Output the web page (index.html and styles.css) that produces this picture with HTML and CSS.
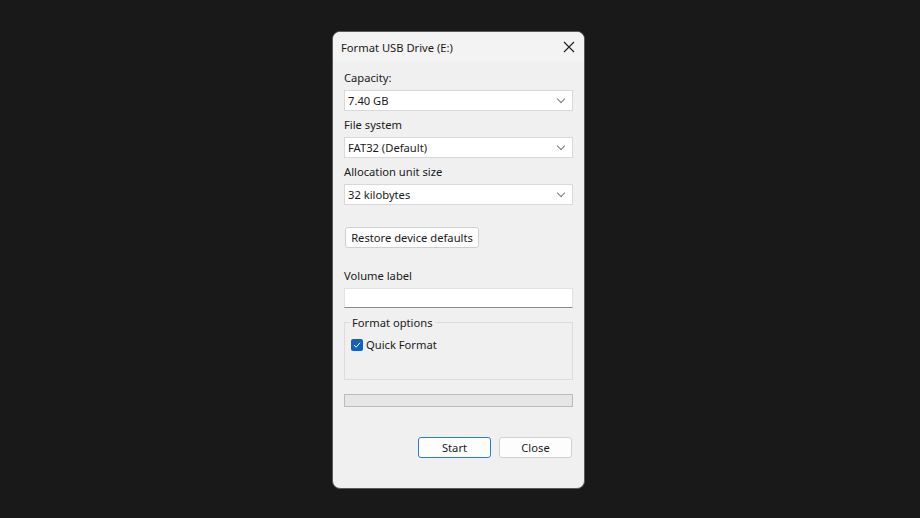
FILE: index.html
```html
<!DOCTYPE html>
<html lang="en">
<head>
    <meta charset="UTF-8">
    <title>Format USB Drive (E:)</title>
    <link rel="stylesheet" href="styles.css">
</head>
<body>
    <div class="dialog">
        <div class="titlebar">
            <span class="title">Format USB Drive (E:)</span>
            <span class="close-x">
                <svg width="12" height="12" viewBox="0 0 12 12">
                    <path d="M1 1 L11 11 M11 1 L1 11" stroke="#1f1f1f" stroke-width="1.1" fill="none"/>
                </svg>
            </span>
        </div>
        <div class="content">
            <div class="field">
                <div class="label">Capacity:</div>
                <div class="select"><span>7.40 GB</span><span class="chev"></span></div>
            </div>
            <div class="field">
                <div class="label">File system</div>
                <div class="select"><span>FAT32 (Default)</span><span class="chev"></span></div>
            </div>
            <div class="field">
                <div class="label">Allocation unit size</div>
                <div class="select"><span>32 kilobytes</span><span class="chev"></span></div>
            </div>

            <button class="btn restore">Restore device defaults</button>

            <div class="field volume">
                <div class="label">Volume label</div>
                <div class="textbox"></div>
            </div>

            <fieldset class="options">
                <legend>Format options</legend>
                <label class="check">
                    <span class="box">
                        <svg width="8" height="8" viewBox="0 0 8 8">
                            <path d="M1 4.2 L3.2 6.2 L7 1.8" stroke="#fff" stroke-width="1" fill="none"/>
                        </svg>
                    </span>
                    Quick Format
                </label>
            </fieldset>

            <div class="progress"></div>

            <div class="actions">
                <button class="btn primary">Start</button>
                <button class="btn">Close</button>
            </div>
        </div>
    </div>
</body>
</html>
```

FILE: styles.css
```css
html, body {
    margin: 0;
    height: 100%;
}
body {
    background-color: #191919;
    font-family: "Noto Sans", "Open Sans", sans-serif;
    font-size: 11.2px;
    color: #1a1a1a;
    display: flex;
    align-items: flex-start;
}
.dialog {
    margin: 31px 0 0 332px;
    width: 253px;
    height: 458px;
    background-color: #f0f0f0;
    border: 1px solid #5a5a5a;
    border-radius: 8px;
    box-sizing: border-box;
    overflow: hidden;
}
.titlebar {
    height: 30px;
    background-color: #f3f3f3;
    display: flex;
    align-items: center;
    justify-content: space-between;
    padding: 0 9px 0 8px;
}
.close-x {
    display: flex;
    margin-top: -1px;
}
.content {
    padding: 8px 11px 0 11px;
}
.field {
    margin-bottom: 6px;
}
.label {
    line-height: 16px;
    margin-bottom: 4px;
}
.select {
    height: 21px;
    box-sizing: border-box;
    background-color: #ffffff;
    border: 1px solid #d9d9d9;
    display: flex;
    align-items: center;
    justify-content: space-between;
    padding: 0 8px 0 3px;
}
.chev {
    width: 5px;
    height: 5px;
    border-right: 1px solid #7a7a7a;
    border-bottom: 1px solid #7a7a7a;
    transform: rotate(45deg);
    margin-top: -3px;
}
.btn {
    font-family: inherit;
    font-size: 11.2px;
    color: #1a1a1a;
    background-color: #fdfdfd;
    border: 1px solid #d0d0d0;
    border-radius: 3px;
    height: 21px;
    padding: 0;
    line-height: 18px;
}
.restore {
    margin-top: 16px;
    margin-left: 1px;
    width: 134px;
}
.volume {
    margin-top: 20px;
}
.textbox {
    height: 20px;
    box-sizing: border-box;
    background-color: #ffffff;
    border: 1px solid #e2e2e2;
    border-bottom: 1px solid #8a8a8a;
}
.options {
    margin: 7px 0 0 0;
    padding: 7px 6px 0 6px;
    height: 65px;
    box-sizing: border-box;
    border: 1px solid #dcdcdc;
}
.options legend {
    padding: 0 2px;
    margin-left: -1px;
}
.check {
    display: flex;
    align-items: center;
    gap: 3px;
}
.box {
    width: 12px;
    height: 12px;
    background-color: #0f62c0;
    border-radius: 2px;
    display: flex;
    align-items: center;
    justify-content: center;
}
.progress {
    margin-top: 14px;
    height: 13px;
    box-sizing: border-box;
    background-color: #e6e6e6;
    border: 1px solid #bcbcbc;
}
.actions {
    display: flex;
    justify-content: flex-end;
    gap: 8px;
    margin-top: 30px;
    padding-right: 1px;
}
.actions .btn {
    width: 73px;
}
.btn.primary {
    border-color: #2a7bd6;
}
```
